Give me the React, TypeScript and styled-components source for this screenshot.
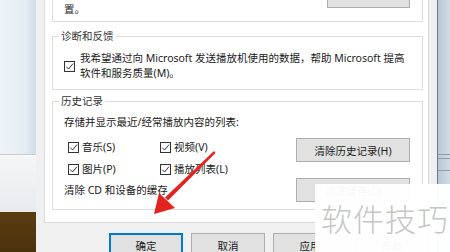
import React from 'react';
import styled, { createGlobalStyle } from 'styled-components';

const GlobalStyle = createGlobalStyle`
  html, body {
    margin: 0;
    padding: 0;
    width: 450px;
    height: 252px;
    overflow: hidden;
  }
  body {
    font-family: "Noto Sans", "Noto Sans CJK SC", sans-serif;
    font-size: 10.5px;
    color: #1a1a1a;
  }
`;

const Screen = styled.div`
  position: relative;
  display: flex;
  width: 450px;
  height: 252px;
  overflow: hidden;
`;

const DesktopLeft = styled.div`
  width: 36px;
  flex-shrink: 0;
  display: flex;
  flex-direction: column;
`;

const DesktopSky = styled.div`
  height: 154px;
  background: linear-gradient(90deg, #eef3f8 0%, #e4ecf4 70%, #cfdbe7 100%);
  border-bottom: 1px solid #c7ccd2;
`;

const DesktopShelf = styled.div`
  height: 56px;
  background: linear-gradient(180deg, #f4f6f8 0%, #e6ebf0 100%);
  border-top: 1px solid #fafafa;
`;

const DesktopFloor = styled.div`
  flex: 1;
  background: linear-gradient(180deg, #5a3d12 0%, #4a320d 100%);
`;

const DesktopRight = styled.div`
  flex: 1;
  display: flex;
  flex-direction: column;
  border-left: 1px solid #6c7886;
  background: linear-gradient(90deg, #b9c6d5 0%, #d2dce7 100%);
`;

const Ledge = styled.div<{ $top: number }>`
  margin-top: ${p => p.$top}px;
  height: 1px;
  background: #8f9cab;
`;

const Dialog = styled.div`
  width: 401px;
  flex-shrink: 0;
  display: flex;
  flex-direction: column;
  background: #f0f0f0;
  padding: 0 8px;
  box-sizing: border-box;
`;

const TabPage = styled.div`
  background: #fff;
  border: 1px solid #d9d9d9;
  border-top: none;
  padding: 0 5px 12px 7px;
  display: flex;
  flex-direction: column;
`;

const Group = styled.div<{ $clipped?: boolean; $gap?: number }>`
  position: relative;
  border: 1px solid #dcdcdc;
  border-top: ${p => (p.$clipped ? 'none' : '1px solid #dcdcdc')};
  margin-top: ${p => p.$gap ?? 0}px;
`;

const Legend = styled.span`
  position: absolute;
  top: -7px;
  left: 6px;
  padding: 0 2px;
  background: #fff;
  line-height: 13px;
  color: #333;
`;

const ClippedRow = styled.div`
  display: flex;
  justify-content: space-between;
  align-items: flex-start;
  padding: 2px 12px 4px 11px;
  line-height: 15px;
`;

const FeedbackRow = styled.div`
  display: flex;
  align-items: center;
  gap: 5px;
  padding: 14px 10px 8px 11px;
`;

const FeedbackText = styled.div`
  line-height: 15px;
`;

const HistoryBody = styled.div`
  display: flex;
  justify-content: space-between;
  padding: 13px 12px 7px 11px;
`;

const HistoryLeft = styled.div`
  display: flex;
  flex-direction: column;
  line-height: 15px;
`;

const CheckGrid = styled.div`
  display: grid;
  grid-template-columns: 92px auto;
  grid-auto-rows: 22px;
  margin-top: 6px;
  padding-left: 4px;
`;

const CheckItem = styled.label`
  display: flex;
  align-items: center;
  gap: 3px;
`;

const CacheLine = styled.div`
  margin-top: 3px;
`;

const HistoryRight = styled.div`
  display: flex;
  flex-direction: column;
  gap: 16px;
  margin-top: 23px;
`;

const Button = styled.button<{ $w?: number; $default?: boolean }>`
  width: ${p => p.$w ?? 114}px;
  height: 24px;
  box-sizing: border-box;
  border: 1px solid ${p => (p.$default ? '#0078d7' : '#adadad')};
  box-shadow: ${p => (p.$default ? 'inset 0 0 0 1px #0078d7' : 'none')};
  background: #e1e1e1;
  font-family: inherit;
  font-size: 10.5px;
  color: #1a1a1a;
  padding: 0;
  flex-shrink: 0;
`;

const TopButton = styled(Button)`
  width: 83px;
  margin-top: -18px;
`;

const Footer = styled.div`
  display: flex;
  justify-content: flex-end;
  gap: 8px;
  margin-top: 10px;
`;

const Box = styled.span`
  width: 11px;
  height: 11px;
  box-sizing: border-box;
  border: 1px solid #333;
  background: #fff;
  display: inline-flex;
  align-items: center;
  justify-content: center;
  flex-shrink: 0;
`;

const Watermark = styled.div`
  position: absolute;
  left: 315px;
  top: 184px;
  width: 135px;
  height: 68px;
  background: rgba(255, 255, 255, 0.97);
  color: #c6c6c6;
  font-family: "Noto Sans CJK SC", sans-serif;
  font-size: 31px;
  font-weight: 300;
  letter-spacing: 1px;
  line-height: 68px;
  padding-left: 6px;
  box-sizing: border-box;
  white-space: nowrap;
`;

const Overlay = styled.svg`
  position: absolute;
  left: 0;
  top: 0;
  pointer-events: none;
`;

const Check = () => (
  <Box>
    <svg width="9" height="9" viewBox="0 0 9 9">
      <path d="M1.2 4.6 L3.6 7 L8 1.6" fill="none" stroke="#333" strokeWidth="1" />
    </svg>
  </Box>
);

const Option = ({ label }: { label: string }) => (
  <CheckItem>
    <Check />
    <span>{label}</span>
  </CheckItem>
);

const App = () => (
  <>
    <GlobalStyle />
    <Screen>
      <DesktopLeft>
        <DesktopSky />
        <DesktopShelf />
        <DesktopFloor />
      </DesktopLeft>

      <Dialog>
        <TabPage>
          <Group $clipped>
            <ClippedRow>
              <span>置。</span>
              <TopButton />
            </ClippedRow>
          </Group>

          <Group $gap={14}>
            <Legend>诊断和反馈</Legend>
            <FeedbackRow>
              <Check />
              <FeedbackText>
                我希望通过向 Microsoft 发送播放机使用的数据，帮助 Microsoft 提高
                <br />
                软件和服务质量(M)。
              </FeedbackText>
            </FeedbackRow>
          </Group>

          <Group $gap={11}>
            <Legend>历史记录</Legend>
            <HistoryBody>
              <HistoryLeft>
                <span>存储并显示最近/经常播放内容的列表:</span>
                <CheckGrid>
                  <Option label="音乐(S)" />
                  <Option label="视频(V)" />
                  <Option label="图片(P)" />
                  <Option label="播放列表(L)" />
                </CheckGrid>
                <CacheLine>清除 CD 和设备的缓存</CacheLine>
              </HistoryLeft>
              <HistoryRight>
                <Button>清除历史记录(H)</Button>
                <Button>清除缓存(C)</Button>
              </HistoryRight>
            </HistoryBody>
          </Group>
        </TabPage>

        <Footer>
          <Button $w={74} $default>确定</Button>
          <Button $w={74}>取消</Button>
          <Button $w={74}>应用</Button>
          <Button $w={74}>帮助</Button>
        </Footer>
      </Dialog>

      <DesktopRight>
        <Ledge $top={154} />
        <Ledge $top={3} />
        <Ledge $top={11} />
      </DesktopRight>

      <Overlay width="450" height="252" viewBox="0 0 450 252">
        <polygon
          points="214,151 215.5,153 168,200.5 165,197.5"
          fill="#e3231f"
        />
        <polygon points="154,214 159,193 175,208" fill="#e3231f" />
      </Overlay>

      <Watermark>软件技巧</Watermark>
    </Screen>
  </>
);

export default App;
